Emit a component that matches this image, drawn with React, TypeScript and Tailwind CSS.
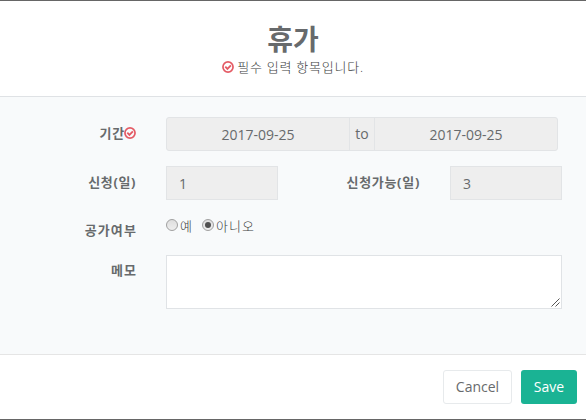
import type { ReactNode } from "react";

function RequiredIcon({ className = "" }: { className?: string }) {
  return (
    <svg viewBox="0 0 12 12" className={`h-3 w-3 shrink-0 ${className}`} fill="none" stroke="#e45b65">
      <circle cx="6" cy="6" r="5.05" strokeWidth="1.7" />
      <path d="M3.3 5.7 5.4 7.8 8.9 4.3" strokeWidth="1.9" />
    </svg>
  );
}

function Label({ children, className = "" }: { children: ReactNode; className?: string }) {
  return (
    <label className={`flex items-center justify-end text-[13px] leading-5 font-bold whitespace-nowrap ${className}`}>
      {children}
    </label>
  );
}

function Radio({ checked = false }: { checked?: boolean }) {
  return (
    <span className="flex h-3 w-3 items-center justify-center rounded-full border border-[#a0a0a0] bg-linear-to-b from-[#dedede] to-[#eeeeee]">
      {checked && <span className="h-1.5 w-1.5 rounded-full bg-[#505050]" />}
    </span>
  );
}

export default function App() {
  return (
    <div className="flex h-[420px] w-[586px] flex-col overflow-hidden border-y border-[#666666] bg-white font-['Open_Sans','Noto_Sans_CJK_KR',sans-serif] text-[#676a6c]">
      <header className="flex h-24 flex-col items-center border-b border-[#dfe2e5] pt-[22px]">
        <h1 className="text-[28px] leading-8 font-bold">휴가</h1>
        <p className="flex h-[23px] items-center text-[13px] leading-6 whitespace-nowrap">
          <RequiredIcon className="mr-[3px]" />
          <span className="font-light tracking-[0.75px] text-[#3c3e40]">필수 입력 항목입니다.</span>
        </p>
      </header>

      <main className="flex h-[257px] flex-col bg-[#f8fafb] pt-5 text-sm">
        <div className="flex h-[34px]">
          <Label className="h-8 w-[136px] tracking-[0.8px]">
            <span className="-mr-px">기간</span>
            <RequiredIcon />
          </Label>
          <div className="ml-[30px] flex w-[392px] rounded-[3px] border border-[#e2e4e6] bg-[#eeeeee]">
            <div className="flex w-[183px] items-center justify-center border-r border-[#e2e4e6] pt-0.5">2017-09-25</div>
            <div className="flex w-[25px] items-center justify-center border-r border-[#e2e4e6]">to</div>
            <div className="flex flex-1 items-center justify-center pt-0.5">2017-09-25</div>
          </div>
        </div>

        <div className="mt-[15px] flex h-[34px]">
          <Label className="h-8 w-[136px] tracking-[0.6px]">신청(일)</Label>
          <div className="ml-[30px] flex w-28 items-center border border-[#e2e4e6] bg-[#eeeeee] px-3 pt-0.5">1</div>
          <Label className="h-8 w-[142px] tracking-[0.7px]">신청가능(일)</Label>
          <div className="ml-[30px] flex w-28 items-center border border-[#e2e4e6] bg-[#eeeeee] px-3 pt-0.5">3</div>
        </div>

        <div className="mt-[15px] flex h-10">
          <Label className="mt-[5px] h-5 w-[137px] tracking-[1.1px]">공가여부</Label>
          <div className="ml-[29px] flex h-5 items-center text-[13px] font-light text-[#3c3e40]">
            <Radio />
            <span className="mt-0.5 ml-0.5">예</span>
            <span className="ml-[10px] flex items-center gap-0.5">
              <Radio checked />
              <span className="mt-0.5 tracking-[1.1px]">아니오</span>
            </span>
          </div>
        </div>

        <div className="flex">
          <Label className="mt-[5px] h-5 w-[137px] tracking-[1.1px]">메모</Label>
          <div className="ml-[29px] flex h-[54px] w-[396px] items-end justify-end border border-[#e0e3e6] bg-white p-px">
            <svg viewBox="0 0 9 9" className="h-[9px] w-[9px]" fill="none" stroke="#555555">
              <path d="M0.5 8.5 8.5 0.5M4.5 8.5 8.5 4.5" />
            </svg>
          </div>
        </div>
      </main>

      <footer className="flex flex-1 justify-end gap-[9px] border-t border-[#e5e5e5] pt-[15px] pr-[9px] text-sm">
        <button className="h-[34px] w-[69px] rounded-[3px] border border-[#e7eaec] bg-white">Cancel</button>
        <button className="h-[34px] w-14 rounded-[3px] bg-[#1ab394] text-white">Save</button>
      </footer>
    </div>
  );
}
